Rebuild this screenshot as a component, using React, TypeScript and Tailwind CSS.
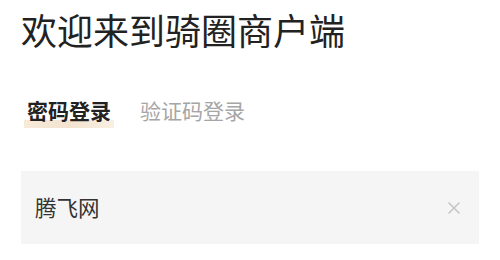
export default function App() {
  return (
    <div
      className="w-[500px] h-[260px] bg-white overflow-hidden"
      style={{ fontFamily: '"Noto Sans CJK SC", "Noto Sans", sans-serif' }}
    >
      {/* Title */}
      <h1 className="pl-[21px] pt-[7px] text-[36px] leading-[44px] text-[#222222] font-normal">
        欢迎来到骑圈商户端
      </h1>

      {/* Tabs */}
      <div className="mt-[45px] flex items-end gap-[29px] pl-[27px]">
        <div className="relative">
          <span className="relative z-10 text-[21px] leading-[28px] font-bold text-[#222222]">
            密码登录
          </span>
          <div className="absolute left-[-3px] right-[-3px] bottom-[-4px] h-[8px] bg-gradient-to-r from-[#f7ead9] via-[#f3e3cf] to-[#f9efe2]" />
        </div>
        <span className="text-[21px] leading-[28px] text-[#a6a6a6]">
          验证码登录
        </span>
      </div>

      {/* Input */}
      <div className="mx-[21px] mt-[47px] h-[73px] bg-[#f5f5f5] flex items-center pl-[14px] pr-[13px]">
        <span className="flex-1 text-[21.5px] text-[#333333]">腾飞网</span>
        <div className="w-[24px] h-[24px] flex items-center justify-center">
          <svg width="12" height="12" viewBox="0 0 12 12">
            <path
              d="M1 1 L11 11 M11 1 L1 11"
              stroke="#c4c4c4"
              strokeWidth="1.5"
              strokeLinecap="round"
            />
          </svg>
        </div>
      </div>
    </div>
  );
}
